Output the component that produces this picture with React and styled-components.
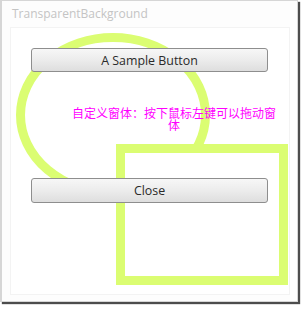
import styled, {createGlobalStyle} from "styled-components";

const GlobalStyle = createGlobalStyle`
  html, body {
    margin: 0;
    padding: 0;
    background: #fff;
  }
`;

const Page = styled.div`
  padding: 0 7px 7px 0;
  width: 305px;
  height: 309px;
  box-sizing: border-box;
`;

const Window = styled.div`
  width: 298px;
  height: 302px;
  box-sizing: border-box;
  border: 1px solid #d6d6d6;
  border-left-width: 2px;
  background: #fdfdfd;
  box-shadow: 2px 2px 1px #4c4c4c;
  display: flex;
  flex-direction: column;
`;

const TitleBar = styled.div`
  height: 26px;
  padding: 4px 0 0 10px;
  box-sizing: border-box;
  font-family: "Open Sans", "Liberation Sans", sans-serif;
  font-size: 12px;
  color: #c4c4c4;
`;

const Client = styled.div`
  position: relative;
  margin: 0 7px 6px 8px;
  flex: 1;
  border: 1px solid #f3f3f3;
  background: #fff;
`;

const Canvas = styled.svg`
  position: absolute;
  left: 0;
  top: 0;
  width: 100%;
  height: 100%;
`;

const Content = styled.div`
  position: relative;
  display: flex;
  flex-direction: column;
  padding: 20px 21px 0 20px;
`;

const Button = styled.div`
  box-sizing: border-box;
  border: 1px solid #8e8e8e;
  border-radius: 3px;
  background: linear-gradient(#f7f7f7, #ececec 50%, #dedede);
  display: flex;
  align-items: center;
  justify-content: center;
  font-family: "Open Sans", "Liberation Sans", sans-serif;
  font-size: 12.4px;
  color: #2a2a2a;
  height: ${p => p.$tall ? 25 : 24}px;
`;

const Caption = styled.div`
  margin: 35px 0 47px 37px;
  width: 212px;
  text-align: center;
  font-family: "Noto Sans CJK SC", sans-serif;
  font-size: 12px;
  line-height: 12px;
  color: #ff00ff;
`;

const lime = "#dbfd72";

export default function App() {
  return (
    <Page>
      <GlobalStyle />
      <Window>
        <TitleBar>TransparentBackground</TitleBar>
        <Client>
          <Canvas>
            <ellipse cx="102" cy="87" rx="92.5" ry="77.5" fill="none" stroke={lime} strokeWidth="9" />
            <rect x="109.5" y="120.5" width="163" height="132" fill="#fff" stroke={lime} strokeWidth="9" />
          </Canvas>
          <Content>
            <Button>A Sample Button</Button>
            <Caption>自定义窗体：按下鼠标左键可以拖动窗体</Caption>
            <Button $tall>Close</Button>
          </Content>
        </Client>
      </Window>
    </Page>
  );
}
